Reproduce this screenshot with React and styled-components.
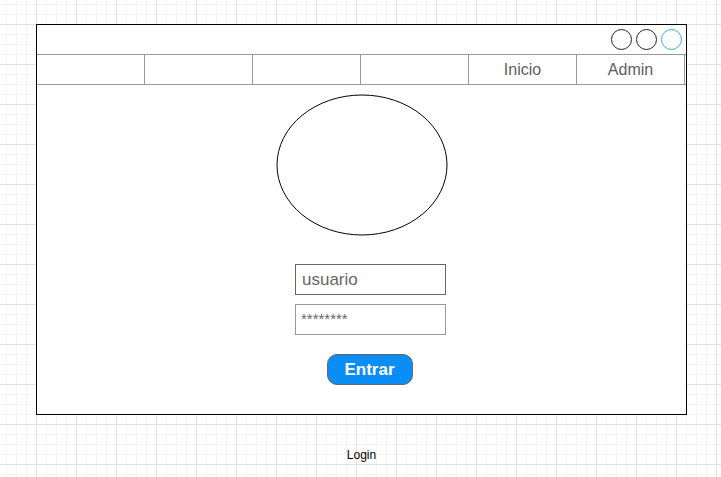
import React from 'react';
import styled, { createGlobalStyle } from 'styled-components';

const GlobalStyle = createGlobalStyle`
  html, body {
    margin: 0;
    padding: 0;
  }
  body {
    width: 721px;
    height: 477px;
    overflow: hidden;
    font-family: "Liberation Sans", Arial, sans-serif;
    background-color: #fff;
    background-image:
      linear-gradient(to right, #e2e2e2 1px, transparent 1px),
      linear-gradient(to bottom, #e2e2e2 1px, transparent 1px),
      linear-gradient(to right, #f4f4f4 1px, transparent 1px),
      linear-gradient(to bottom, #f4f4f4 1px, transparent 1px);
    background-size: 40px 40px, 40px 40px, 10px 10px, 10px 10px;
    background-position: 36px 24px, 36px 24px, 6px 4px, 6px 4px;
  }
`;

const Page = styled.div`
  display: flex;
  flex-direction: column;
  padding: 24px 0 0 36px;
`;

const Frame = styled.div`
  box-sizing: border-box;
  width: 651px;
  height: 391px;
  border: 1px solid #000;
  background: #fff;
  display: flex;
  flex-direction: column;
`;

const TitleBar = styled.div`
  height: 29px;
  display: flex;
  justify-content: flex-end;
  align-items: center;
  gap: 4px;
  padding-right: 4px;
`;

const WindowDot = styled.span`
  box-sizing: border-box;
  width: 21px;
  height: 21px;
  border-radius: 50%;
  border: 1px solid ${p => (p.active ? '#3ea6f2' : '#222')};
`;

const Nav = styled.div`
  display: flex;
  height: 31px;
  box-sizing: border-box;
  border-top: 1px solid #999;
  border-bottom: 1px solid #999;
`;

const NavCell = styled.div`
  box-sizing: border-box;
  flex: 0 0 108px;
  border-right: 1px solid #999;
  display: flex;
  align-items: center;
  justify-content: center;
  padding-top: 1px;
  font-size: 16px;
  color: #5e5e5e;
`;

const Content = styled.div`
  display: flex;
  flex-direction: column;
  align-items: center;
  padding-top: 9px;
`;

const Avatar = styled.svg`
  display: block;
  margin-left: 1px;
`;

const Form = styled.div`
  display: flex;
  flex-direction: column;
  align-items: center;
  gap: 9px;
  margin-top: 28px;
  margin-left: 18px;
`;

const Field = styled.div`
  box-sizing: border-box;
  width: 151px;
  height: 31px;
  border: 1px solid ${p => (p.strong ? '#666' : '#999')};
  display: flex;
  align-items: ${p => (p.secret ? 'flex-start' : 'center')};
  padding: ${p => (p.secret ? '5px 0 0 5px' : '0 0 0 6px')};
  font-size: ${p => (p.secret ? '15px' : '17px')};
  color: #666;
`;

const Button = styled.button`
  box-sizing: border-box;
  margin-top: 19px;
  margin-left: 16px;
  width: 86px;
  height: 31px;
  border-radius: 10px;
  border: 1px solid #666;
  background: #0a8ef5;
  color: #fff;
  font-family: "Liberation Sans", Arial, sans-serif;
  font-weight: bold;
  font-size: 17px;
  padding: 0;
`;

const Caption = styled.div`
  width: 651px;
  text-align: center;
  margin-top: 33px;
  font-size: 12px;
  color: #000;
`;

const navItems = ['', '', '', '', 'Inicio', 'Admin'];

export default function App() {
  return (
    <>
      <GlobalStyle />
      <Page>
        <Frame>
          <TitleBar>
            <WindowDot />
            <WindowDot />
            <WindowDot active />
          </TitleBar>
          <Nav>
            {navItems.map((label, i) => (
              <NavCell key={i}>{label}</NavCell>
            ))}
          </Nav>
          <Content>
            <Avatar width="172" height="142" viewBox="0 0 172 142">
              <ellipse cx="86" cy="71" rx="85" ry="70" fill="none" stroke="#000" strokeWidth="1" />
            </Avatar>
            <Form>
              <Field strong>usuario</Field>
              <Field secret>********</Field>
            </Form>
            <Button>Entrar</Button>
          </Content>
        </Frame>
        <Caption>Login</Caption>
      </Page>
    </>
  );
}
